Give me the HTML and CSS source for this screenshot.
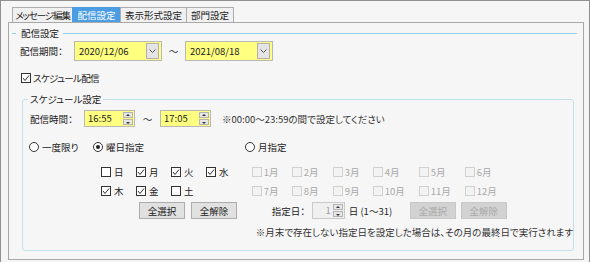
FILE: index.html
```html
<!DOCTYPE html>
<html>
<head>
	<meta charset="utf-8">
	<title>配信設定</title>
	<link rel="stylesheet" href="styles.css">
</head>
<body>
	<div class="window">
		<div class="tabs">
			<div class="tab t1">メッセージ編集</div>
			<div class="tab t2 active">配信設定</div>
			<div class="tab t3">表示形式設定</div>
			<div class="tab t4">部門設定</div>
		</div>
		<div class="panel">
			<div class="group-head"><span class="dash"></span><span class="group-title">配信設定</span><span class="group-line"></span></div>
			<div class="period">
				<span class="label">配信期間：</span>
				<div class="combo"><span class="value">2020/12/06</span><span class="drop"><svg width="7" height="4" viewBox="0 0 7 4"><polyline points="0.5,0.5 3.5,3.5 6.5,0.5" fill="none" stroke="#555" stroke-width="1"/></svg></span></div>
				<span class="tilde">～</span>
				<div class="combo"><span class="value">2021/08/18</span><span class="drop"><svg width="7" height="4" viewBox="0 0 7 4"><polyline points="0.5,0.5 3.5,3.5 6.5,0.5" fill="none" stroke="#555" stroke-width="1"/></svg></span></div>
			</div>
			<div class="check-row"><span class="cb"><svg width="8" height="8" viewBox="0 0 8 8"><polyline points="1,4 3,6.5 7,1.5" fill="none" stroke="#333" stroke-width="1"/></svg></span><span class="kana">スケジュール配信</span></div>
			<fieldset class="schedule">
				<legend>スケジュール設定</legend>
				<div class="time">
					<span class="label">配信時間：</span>
					<div class="spin"><span class="value">16:55</span><span class="arrows"><span class="up"></span><span class="down"></span></span></div>
					<span class="tilde wide">～</span>
					<div class="spin"><span class="value">17:05</span><span class="arrows"><span class="up"></span><span class="down"></span></span></div>
					<span class="hint">※00:00～23:59の間で設定してください</span>
				</div>
				<div class="radios">
					<div class="radio r1"><span class="dot"></span>一度限り</div>
					<div class="radio r2"><span class="dot on"></span>曜日指定</div>
					<div class="radio"><span class="dot"></span>月指定</div>
				</div>
				<div class="options">
					<div class="weekdays">
						<div class="wd-grid">
							<div class="item"><span class="cb"></span>日</div>
							<div class="item"><span class="cb"><svg width="8" height="8" viewBox="0 0 8 8"><polyline points="1,4 3,6.5 7,1.5" fill="none" stroke="#333" stroke-width="1"/></svg></span>月</div>
							<div class="item"><span class="cb"><svg width="8" height="8" viewBox="0 0 8 8"><polyline points="1,4 3,6.5 7,1.5" fill="none" stroke="#333" stroke-width="1"/></svg></span>火</div>
							<div class="item"><span class="cb"><svg width="8" height="8" viewBox="0 0 8 8"><polyline points="1,4 3,6.5 7,1.5" fill="none" stroke="#333" stroke-width="1"/></svg></span>水</div>
							<div class="item"><span class="cb"><svg width="8" height="8" viewBox="0 0 8 8"><polyline points="1,4 3,6.5 7,1.5" fill="none" stroke="#333" stroke-width="1"/></svg></span>木</div>
							<div class="item"><span class="cb"><svg width="8" height="8" viewBox="0 0 8 8"><polyline points="1,4 3,6.5 7,1.5" fill="none" stroke="#333" stroke-width="1"/></svg></span>金</div>
							<div class="item"><span class="cb"></span>土</div>
						</div>
						<div class="buttons wd-buttons">
							<button class="btn">全選択</button>
							<button class="btn">全解除</button>
						</div>
					</div>
					<div class="months">
						<div class="m-grid">
							<div class="item off"><span class="cb"></span>1月</div>
							<div class="item off"><span class="cb"></span>2月</div>
							<div class="item off"><span class="cb"></span>3月</div>
							<div class="item off"><span class="cb"></span>4月</div>
							<div class="item off"><span class="cb"></span>5月</div>
							<div class="item off"><span class="cb"></span>6月</div>
							<div class="item off"><span class="cb"></span>7月</div>
							<div class="item off"><span class="cb"></span>8月</div>
							<div class="item off"><span class="cb"></span>9月</div>
							<div class="item off"><span class="cb"></span>10月</div>
							<div class="item off"><span class="cb"></span>11月</div>
							<div class="item off"><span class="cb"></span>12月</div>
						</div>
						<div class="day-row">
							<span class="day-label">指定日：</span>
							<div class="spin day-spin"><span class="value">1</span><span class="arrows"><span class="up"></span><span class="down"></span></span></div>
							<span class="day-range">日 (1～31)</span>
							<div class="buttons">
								<button class="btn" disabled>全選択</button>
								<button class="btn" disabled>全解除</button>
							</div>
						</div>
						<p class="note">※月末で存在しない指定日を設定した場合は、その月の最終日で実行されます</p>
					</div>
				</div>
			</fieldset>
		</div>
	</div>
</body>
</html>
```

FILE: styles.css
```css
body{
	margin: 0;
	background: #f6f6f6;
	font-family: "Meiryo UI", "Noto Sans CJK JP", sans-serif;
	font-size: 9.5px;
	line-height: 12px;
	color: #222;
	font-feature-settings: "palt";
}
.window{
	box-sizing: border-box;
	width: 590px;
	height: 262px;
	border: 1px solid #909090;
	border-bottom: none;
	padding: 6px 5px 0 7px;
}

/* tabs */
.tabs{
	display: flex;
	margin-left: 4px;
	height: 15px;
}
.tab{
	box-sizing: border-box;
	height: 15px;
	border: 1px solid #adadad;
	border-bottom: none;
	background: #f0f0f0;
	text-align: center;
	line-height: 14px;
	white-space: nowrap;
	overflow: hidden;
}
.tab + .tab{
	margin-left: -1px;
}
.t1{ width: 61px; letter-spacing: -1.1px; }
.t2{ width: 49px; }
.t3{ width: 67px; }
.t4{ width: 48px; }
.tab.active{
	background: #4a9de2;
	border-color: #4a9de2;
	color: #fff;
}

.panel{
	box-sizing: border-box;
	height: 238px;
	border: 1px solid #a8a8a8;
}

/* group header */
.group-head{
	display: flex;
	align-items: center;
	margin-top: 4px;
	height: 12px;
}
.dash{
	width: 4px;
	height: 1px;
	margin-left: 3px;
	background: #8fcfe8;
}
.group-title{
	margin: 0 4px 0 5px;
}
.group-line{
	flex: 1;
	height: 1px;
	margin-right: 6px;
	background: #8fcfe8;
}

/* period */
.period{
	display: flex;
	align-items: center;
	height: 20px;
	margin-top: 2px;
	padding-left: 11px;
}
.label{
	width: 54px;
}
.combo{
	box-sizing: border-box;
	display: flex;
	width: 88px;
	height: 20px;
	border: 1px solid #b8b8b8;
	background: #ffff80;
}
.value{
	flex: 1;
	padding-left: 4px;
	line-height: 18px;
}
.drop{
	box-sizing: border-box;
	display: flex;
	align-items: center;
	justify-content: center;
	width: 13px;
	margin: 1px 2px 1px 0;
	border: 1px solid #b0b0b0;
	background: #e4e4e4;
}
.tilde{
	width: 23px;
	text-align: center;
}
.tilde.wide{
	width: 25px;
}

/* checkbox */
.check-row{
	display: flex;
	align-items: center;
	gap: 2px;
	height: 12px;
	margin-top: 11px;
	padding-left: 12px;
}
.kana{
	letter-spacing: -0.7px;
}
.cb{
	box-sizing: border-box;
	display: flex;
	align-items: center;
	justify-content: center;
	width: 10px;
	height: 10px;
	border: 1px solid #333;
	background: #fff;
	flex: none;
}

/* schedule box */
.schedule{
	box-sizing: border-box;
	width: 552px;
	height: 158px;
	margin: 9px 0 0 13px;
	padding: 0 0 0 7px;
	border: 1px solid #c2e2ea;
	border-radius: 3px;
	min-width: 0;
}
.schedule legend{
	padding: 0 2px;
	margin-left: -2px;
}
.time{
	display: flex;
	align-items: center;
	height: 17px;
	margin-top: 5px;
}
.spin{
	box-sizing: border-box;
	display: flex;
	width: 51px;
	height: 17px;
	border: 1px solid #b8b8b8;
	background: #ffff80;
}
.spin .value{
	padding-left: 3px;
	line-height: 15px;
}
.arrows{
	display: flex;
	flex-direction: column;
	gap: 1px;
	width: 10px;
	margin: 1px 1px 1px 0;
}
.up, .down{
	flex: 1;
	box-sizing: border-box;
	border: 1px solid #b4b4b4;
	background: #e6e6e6;
	position: relative;
}
.up::after, .down::after{
	content: "";
	position: absolute;
	left: 2px;
	border-left: 2px solid transparent;
	border-right: 2px solid transparent;
}
.up::after{
	top: 1px;
	border-bottom: 2px solid #333;
}
.down::after{
	top: 2px;
	border-top: 2px solid #333;
}
.hint{
	margin-left: 11px;
	color: #333;
}

/* radios */
.radios{
	display: flex;
	height: 12px;
	margin-top: 14px;
}
.radio{
	display: flex;
	align-items: center;
	gap: 3px;
}
.r1{
	width: 64px;
	margin-left: -1px;
}
.r2{
	width: 152px;
}
.dot{
	box-sizing: border-box;
	display: flex;
	align-items: center;
	justify-content: center;
	width: 10px;
	height: 10px;
	border: 1px solid #333;
	border-radius: 50%;
	background: #fff;
}
.dot.on::after{
	content: "";
	width: 4px;
	height: 4px;
	border-radius: 50%;
	background: #222;
}

/* weekday / month options */
.options{
	display: flex;
	margin-top: 9px;
}
.weekdays{
	width: 152px;
	margin-left: 71px;
}
.wd-grid{
	display: grid;
	grid-template-columns: repeat(4, 35px);
	grid-auto-rows: 19px;
}
.item{
	display: flex;
	align-items: center;
	gap: 3px;
}
.m-grid{
	display: grid;
	grid-template-columns: 40px 41px 40px 46px 46px 40px;
	grid-auto-rows: 19px;
}
.m-grid .item{
	gap: 2px;
}
.item.off{
	color: #a8a8a8;
}
.item.off .cb{
	border-color: #d0d0d0;
	background: #f3f3f3;
}
.buttons{
	display: flex;
	gap: 5px;
}
.wd-buttons{
	gap: 6px;
	margin: 2px 0 0 38px;
}
.btn{
	box-sizing: border-box;
	width: 46px;
	height: 17px;
	padding: 0;
	border: 1px solid #adadad;
	background: #e1e1e1;
	font: inherit;
	color: #222;
}
.btn:disabled{
	border-color: #c8c8c8;
	background: #d2d2d2;
	color: #a9a9a9;
}
.day-row{
	display: flex;
	align-items: center;
	height: 17px;
	margin-top: 2px;
}
.day-label{
	width: 40px;
	margin-left: 20px;
}
.spin.day-spin{
	width: 33px;
	border-color: #cacaca;
	background: #f0f0f0;
	color: #a0a0a0;
}
.day-spin .value{
	text-align: right;
	padding-right: 2px;
}
.day-range{
	width: 61px;
	margin-left: 4px;
}
.note{
	margin: 7px 0 0 4px;
	color: #333;
	white-space: nowrap;
}
```
